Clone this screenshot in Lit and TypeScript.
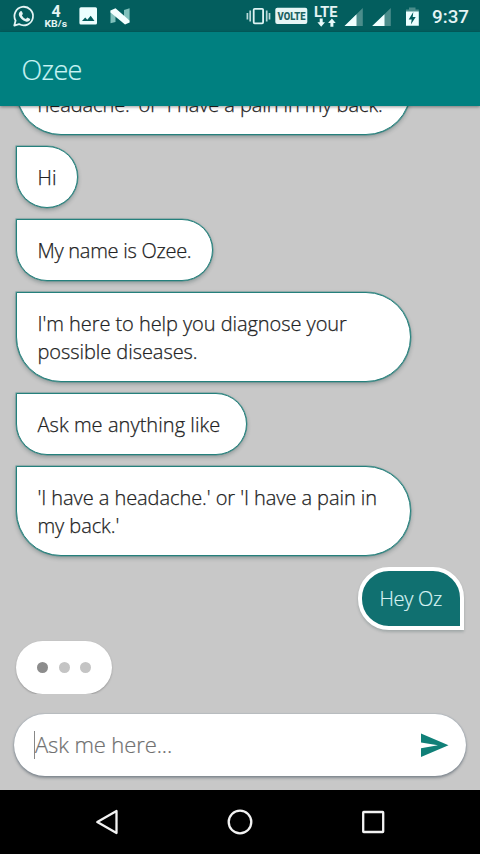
import { LitElement, html, css, svg } from "lit";
import { customElement, property } from "lit/decorators.js";

interface Line { text: string; spacing: number }
interface Message { width: number; lines: Line[]; mine?: boolean; scrolled?: boolean }

const messages: Message[] = [
  { width: 394.5, scrolled: true, lines: [{ text: "headache.' or 'I have a pain in my back.'", spacing: -0.08 }] },
  { width: 62, lines: [{ text: "Hi", spacing: 0 }] },
  { width: 197, lines: [{ text: "My name is Ozee.", spacing: -0.27 }] },
  { width: 394.5, lines: [{ text: "I'm here to help you diagnose your", spacing: -0.06 }, { text: "possible diseases.", spacing: -0.06 }] },
  { width: 231, lines: [{ text: "Ask me anything like", spacing: 0.05 }] },
  { width: 394.5, lines: [{ text: "'I have a headache.' or 'I have a pain in", spacing: -0.07 }, { text: "my back.'", spacing: -0.07 }] },
  { width: 106, mine: true, lines: [{ text: "Hey Oz", spacing: -0.3 }] },
];

@customElement("chat-bubble")
class ChatBubble extends LitElement {
  @property({ attribute: false }) message!: Message;
  static styles = css`
    :host { display: block; flex: none; }
    .bubble {
      box-sizing: border-box;
      border: 1px solid #25807c;
      border-radius: 0 45px 45px 45px;
      background: #fff;
      color: #222;
      -webkit-text-stroke: 0.25px #222;
      padding: 17px 0 15px 20.5px;
      box-shadow: 0 0 0 0.5px rgba(37, 128, 124, 0.6), 0 2px 4px rgba(0, 40, 40, 0.3);
    }
    .short { border-radius: 0 31px 31px 31px; }
    .scrolled { padding-top: 45px; }
    .mine {
      border: 4px solid #fff;
      border-radius: 31px 31px 0 31px;
      background: #107070;
      color: #d9f3f3;
      -webkit-text-stroke: 0.2px #d9f3f3;
      padding: 14px 0 13px 17.5px;
      box-shadow: 0 2px 3px rgba(0, 40, 40, 0.2);
    }
    .line { display: block; height: 28px; line-height: 28px; white-space: nowrap; }
  `;
  render() {
    const m = this.message;
    const kind = m.mine ? "mine" : m.scrolled ? "scrolled" : m.lines.length === 1 ? "short" : "";
    return html`<div class="bubble ${kind}" style="width:${m.width}px">
      ${m.lines.map((l) => html`<span class="line" style="letter-spacing:${l.spacing}px">${l.text}</span>`)}
    </div>`;
  }
}

const statusIcons = svg`
  <path d="M14.3 25.6 15.6 20.6A9.3 9.3 0 1 1 19 24.1Z" fill="none" stroke="#e4f4f4" stroke-width="1.8" stroke-linejoin="round"/>
  <path d="M20.4 11.2q1-.5 1.5.4l.9 2q.2.6-.9 1.8 1.4 2.6 4 3.7l1.4-1.6 2.5 1.2q.7.4.1 1.6-1.4 2-4.1 1.3-5.2-1.8-7-6.7-.4-2.2 1.6-3.7Z" fill="#e4f4f4"/>
  <path fill-rule="evenodd" d="M81 7.3h14.5q1.5 0 1.5 1.5V23q0 1.6-1.5 1.6H81q-1.6 0-1.6-1.6V8.8q0-1.5 1.6-1.5Zm1 13.700h12.500l-3.800-5.300-3.400 4.100-2.100-2.400Z" fill="#ecffff"/>
  <path d="M110.500 10.500V23.200L115.500 22V12Z M124 10 129.600 8.200V20.500L124 17Z" fill="#7fc0bb"/>
  <path d="M110.500 10.500 115.500 8.300 129.600 20.500V22.500L125 24.400 110.500 12.500Z" fill="#f3ffff"/>
  <rect x="253.700" y="8.800" width="9.400" height="14.500" rx="1" fill="none" stroke="#dff4f4" stroke-width="1.800"/>
  <path d="M250.200 10.500v11M247.400 13v6.500M266.700 10.500v11M269.500 13v6.500" stroke="#b9dada" stroke-width="1.700"/>
  <rect x="275.300" y="7.800" width="32" height="16.300" rx="2" fill="#e5f5f5"/>
  <path d="M319.700 18.500h3v3.700h2.300l-3.800 4.600-3.800-4.600h2.300ZM330.400 26.800h3v-3.700h2.300l-3.800-4.600-3.800 4.600h2.300Z" fill="#e8fafa"/>
  <path d="M344.500 26 362.800 8v18Z M372.200 26 390.800 8v18Z" fill="#4b8d8b"/>
  <path d="M344.500 26 356.500 14.300V26Z M372.200 26 384.500 14.300V26Z" fill="#f0ffff"/>
  <path d="M406 12V9.500h3V7.500h6.500v2h3.300V12Z" fill="#4b8d8b"/>
  <path fill-rule="evenodd" d="M406 11.500h12.800V25.800H406ZM413.300 12l-4.600 7.400h3l-.8 5 4.800-7.300h-3Z" fill="#ecffff"/>`;

@customElement("app-root")
class AppRoot extends LitElement {
  static styles = css`
    :host {
      display: flex; flex-direction: column; width: 480px; height: 854px; overflow: hidden;
      background: #c8c8c8; font: 300 20px "Open Sans", "Noto Sans", sans-serif;
    }
    .status { flex: none; height: 32px; background: #035e5e; }
    .status svg { display: block; }
    .status text { font-family: Roboto, sans-serif; fill: #e4f4f4; }
    .header {
      flex: none; box-sizing: border-box; height: 74px; padding: 0 21.5px; background: #008080; color: #c9f3f3;
      display: flex; align-items: center; font-size: 27px; letter-spacing: -0.6px;
      -webkit-text-stroke: 0.2px #c9f3f3;
      box-shadow: 0 1px 3px rgba(0, 0, 0, 0.4); z-index: 1;
    }
    .chat {
      flex: 1; min-height: 0; overflow: hidden; display: flex; flex-direction: column;
      justify-content: flex-end; align-items: flex-start; gap: 11px; padding: 0 16px;
    }
    .right { align-self: flex-end; }
    .typing {
      flex: none; box-sizing: border-box; width: 96px; height: 53px; border-radius: 27px; background: #fff;
      display: flex; align-items: center; justify-content: center; gap: 10.5px;
      box-shadow: 0 1px 2px rgba(0, 0, 0, 0.25);
    }
    .dot { width: 11px; height: 11px; border-radius: 50%; background: #c4c4c4; }
    .active { background: #8c8c8c; }
    .composer {
      flex: none; box-sizing: border-box; height: 62.5px; margin: 20px 14px 14px; padding: 0 16px 0 20px;
      border-radius: 32px; background: #fff; display: flex; align-items: center;
      box-shadow: 0 2px 3px rgba(50, 65, 75, 0.45), 0 0 1.5px rgba(120, 140, 160, 0.8);
    }
    .caret { width: 1px; height: 28px; background: #888; }
    .hint { flex: 1; color: #707070; -webkit-text-stroke: 0.2px #707070; font-size: 22px; line-height: 30px; letter-spacing: -0.1px; white-space: nowrap; padding-bottom: 1px; }
    .nav { flex: none; height: 64px; background: #000; }
    .nav svg, .composer svg { display: block; }
  `;
  render() {
    return html`
      <div class="status">
        <svg width="480" height="32" viewBox="0 0 480 32">
          ${statusIcons}
          <text x="51.5" y="17" font-size="16" font-weight="700" textLength="9">4</text>
          <text x="44.5" y="26.500" font-size="9" font-weight="700" textLength="22.5" lengthAdjust="spacingAndGlyphs">KB/s</text>
          <text x="277.5" y="20" font-size="11" font-weight="900" textLength="28" lengthAdjust="spacingAndGlyphs" style="fill:#1c6262">VOLTE</text>
          <text x="314" y="17" font-size="14.5" font-weight="700" textLength="23.5" lengthAdjust="spacingAndGlyphs">LTE</text>
          <text x="432" y="23" font-size="19" font-weight="500" textLength="37" lengthAdjust="spacingAndGlyphs">9:37</text>
        </svg>
      </div>
      <div class="header">Ozee</div>
      <div class="chat">
        ${messages.map((m) => html`<chat-bubble class=${m.mine ? "right" : ""} .message=${m}></chat-bubble>`)}
        <div class="typing"><span class="dot active"></span><span class="dot"></span><span class="dot"></span></div>
      </div>
      <div class="composer">
        <span class="caret"></span><span class="hint">Ask me here...</span>
        <svg width="30" height="26" viewBox="0 0 30 26"><path d="M1 1.5 28.5 13.3 1 25V16.3L18 13.3 1 10.5Z" fill="#108078"/></svg>
      </div>
      <div class="nav">
        <svg width="480" height="64" viewBox="0 0 480 64" fill="none" stroke="#f2f2f2" stroke-width="2.3" stroke-linejoin="round">
          <path d="M97.3 32 116.5 21V43Z"/><circle cx="240" cy="32" r="11.3"/><rect x="363.2" y="22" width="20" height="20" rx="0.5"/>
        </svg>
      </div>`;
  }
}
